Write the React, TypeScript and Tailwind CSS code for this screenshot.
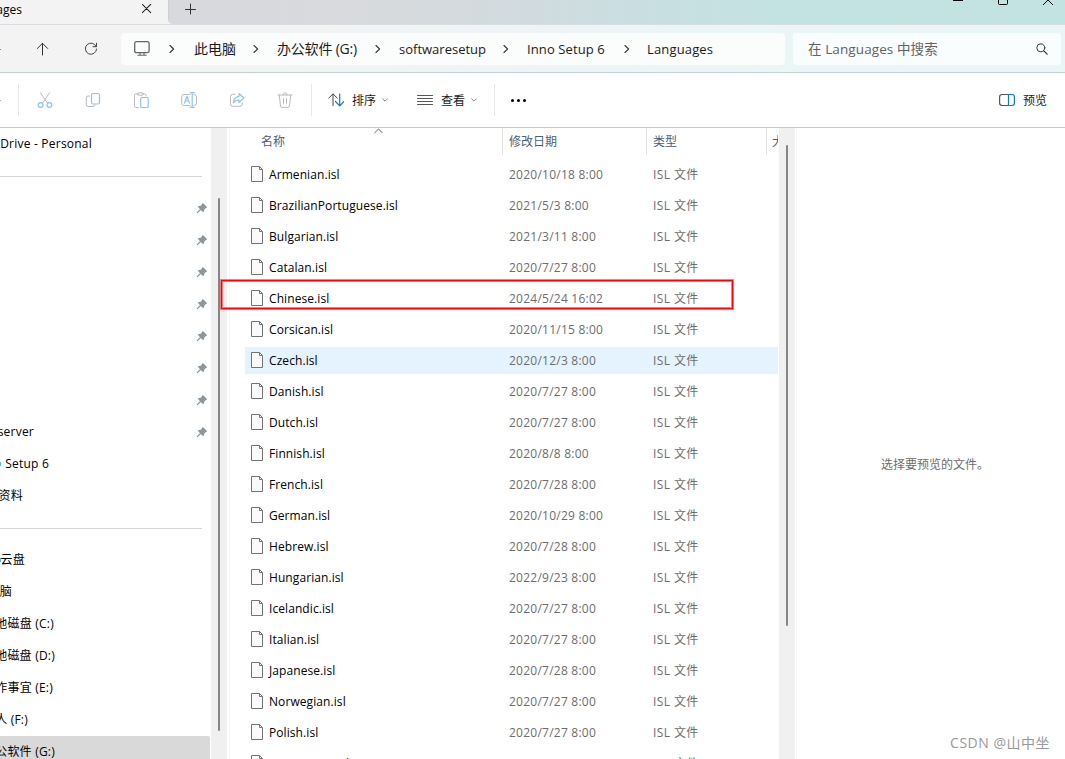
import type { ReactNode } from "react";
import clsx from "clsx";

type FileRow = {
  name: string;
  modified: string;
};

type SideItem =
  | { kind: "divider" }
  | {
      kind: "item";
      label?: string;
      width?: string;
      pinned?: boolean;
      active?: boolean;
      dot?: boolean;
    };

const files: FileRow[] = [
  { name: "Armenian.isl", modified: "2020/10/18 8:00" },
  { name: "BrazilianPortuguese.isl", modified: "2021/5/3 8:00" },
  { name: "Bulgarian.isl", modified: "2021/3/11 8:00" },
  { name: "Catalan.isl", modified: "2020/7/27 8:00" },
  { name: "Chinese.isl", modified: "2024/5/24 16:02" },
  { name: "Corsican.isl", modified: "2020/11/15 8:00" },
  { name: "Czech.isl", modified: "2020/12/3 8:00" },
  { name: "Danish.isl", modified: "2020/7/27 8:00" },
  { name: "Dutch.isl", modified: "2020/7/27 8:00" },
  { name: "Finnish.isl", modified: "2020/8/8 8:00" },
  { name: "French.isl", modified: "2020/7/28 8:00" },
  { name: "German.isl", modified: "2020/10/29 8:00" },
  { name: "Hebrew.isl", modified: "2020/7/28 8:00" },
  { name: "Hungarian.isl", modified: "2022/9/23 8:00" },
  { name: "Icelandic.isl", modified: "2020/7/27 8:00" },
  { name: "Italian.isl", modified: "2020/7/27 8:00" },
  { name: "Japanese.isl", modified: "2020/7/28 8:00" },
  { name: "Norwegian.isl", modified: "2020/7/27 8:00" },
  { name: "Polish.isl", modified: "2020/7/27 8:00" },
  { name: "Portuguese.isl", modified: "2020/7/27 8:00" },
];

const hovered = "Czech.isl";

const sideItems: SideItem[] = [
  { kind: "item", label: "Drive - Personal", width: "w-[92px]" },
  { kind: "divider" },
  { kind: "item", pinned: true },
  { kind: "item", pinned: true },
  { kind: "item", pinned: true },
  { kind: "item", pinned: true },
  { kind: "item", pinned: true },
  { kind: "item", pinned: true },
  { kind: "item", pinned: true },
  { kind: "item", label: "server", width: "w-[34px]", pinned: true },
  { kind: "item", label: "Setup 6", width: "w-[49px]", dot: true },
  { kind: "item", label: "资料", width: "w-[23px]" },
  { kind: "divider" },
  { kind: "item", label: "云盘", width: "w-[25px]", dot: true },
  { kind: "item", label: "电脑", width: "w-[12px]" },
  { kind: "item", label: "地磁盘 (C:)", width: "w-[54px]" },
  { kind: "item", label: "地磁盘 (D:)", width: "w-[55px]" },
  { kind: "item", label: "作事宜 (E:)", width: "w-[53px]" },
  { kind: "item", label: "人 (F:)", width: "w-[28px]" },
  { kind: "item", label: "公软件 (G:)", width: "w-[55px]", active: true },
];

function Icon({
  children,
  className,
  size = 16,
}: {
  children: ReactNode;
  className?: string;
  size?: number;
}) {
  return (
    <svg
      width={size}
      height={size}
      viewBox={`0 0 ${size} ${size}`}
      fill="none"
      stroke="currentColor"
      strokeLinecap="round"
      strokeLinejoin="round"
      className={clsx("shrink-0", className)}
    >
      {children}
    </svg>
  );
}

function Chevron() {
  return (
    <Icon size={8} className="text-[#333]">
      <path d="M2 0.5 5.6 4 2 7.5" strokeWidth="1.1" />
    </Icon>
  );
}

function DownChevron() {
  return (
    <Icon size={6} className="text-[#8a8a8a]">
      <path d="M0.6 1.8 3 4.2 5.4 1.8" />
    </Icon>
  );
}

function Pin() {
  return (
    <svg width="12" height="12" viewBox="0 0 12 12" className="shrink-0">
      <path
        d="M6.6 0.8 11.2 5.3 9.9 6 8.4 7.2 8 9.6 7 10 4.9 8 1.4 11.2 0.7 10.6 4 7.1 1.9 5 2.4 4 4.9 3.8 6 2.2Z"
        fill="#8b969f"
      />
    </svg>
  );
}

function FileIcon() {
  return (
    <svg width="12" height="16" viewBox="0 0 12 16" className="mb-[2px] shrink-0">
      <path
        d="M0.5 0.5H8.5L11.5 3.5V15.5H0.5Z"
        fill="#fafafa"
        stroke="#737373"
      />
      <path d="M8.5 0.5V3.5H11.5" fill="none" stroke="#737373" />
    </svg>
  );
}

function TabStrip() {
  return (
    <div className="flex h-6 bg-[#f3f3f3]">
      <div className="flex w-[168px] shrink-0 items-start">
        <div className="flex w-[22px] justify-end overflow-hidden pt-[2px] text-[12px] leading-4 text-black">
          <span>Languages</span>
        </div>
        <Icon size={10} className="mt-1 ml-[120px] text-[#1f1f1f]">
          <path d="M0.3 0.4 8.7 8.6M8.7 0.4 0.3 8.6" strokeWidth="1.05" />
        </Icon>
      </div>
      <div className="flex flex-1 items-start rounded-bl-[5px] border-l border-[#cfd0d3] bg-[linear-gradient(90deg,#d8d9dd_0px,#d8dadd_190px,#d2dbdf_350px,#c9dfe2_480px,#c3e3e2_620px)]">
        <Icon size={12} className="mt-[3px] ml-4 text-[#333]">
          <path d="M5.5 1V11M0.5 6.5H10.5" />
        </Icon>
        <div className="ml-auto flex gap-[35px] pr-[12px] text-black">
          <Icon size={10}>
            <path d="M0 0.3H10" strokeWidth="1.2" />
          </Icon>
          <Icon size={10}>
            <path d="M0.5 -2V3.5Q0.5 4.5 1.5 4.5H8.5Q9.5 4.5 9.5 3.5V-2" />
          </Icon>
          <Icon size={10}>
            <path d="M0.3 4.7 5 0 9.7 4.7" />
          </Icon>
        </div>
      </div>
    </div>
  );
}

function AddressBar() {
  return (
    <div className="flex h-[49px] items-center border-y border-t-[#d8dddf] border-b-[#c4d3d3] bg-[linear-gradient(90deg,#f3f3f3_250px,#eef4f6_560px,#eaf6f6_800px)] pt-px text-[13px] text-[#1b1b1b]">
      <div className="h-px w-px bg-[#888]" />
      <Icon size={14} className="ml-[35px] text-[#333]">
        <path d="M6.5 13V1.5M1.3 6.5 6.5 1.3 11.7 6.5" />
      </Icon>
      <Icon size={14} className="ml-[34px] text-[#444]">
        <path d="M12.2 4.6A5.6 5.6 0 1 0 12.6 7M12.5 1.2V4.7H9" />
      </Icon>
      <div className="ml-[23px] flex h-8 w-[664px] shrink-0 items-center rounded-[4px] bg-[#fbfcfc]">
        <Icon size={16} className="ml-[13px] text-[#666]">
          <rect x="0.7" y="0.7" width="14.4" height="11" rx="1.8" strokeWidth="1.3" />
          <path d="M6 12V14M10 12V14M3.8 14.3H12.2" strokeWidth="1.1" />
        </Icon>
        <div className="ml-[18px] flex w-2">
          <Chevron />
        </div>
        <span className="mb-[2px] ml-[18px] w-[43px] whitespace-nowrap text-[14px]">
          此电脑
        </span>
        <div className="ml-[15px] flex">
          <Chevron />
        </div>
        <span className="mb-[2px] ml-[17px] w-[82px] whitespace-nowrap text-[14px] tracking-[-0.2px]">
          办公软件 (G:)
        </span>
        <div className="ml-[15px] flex">
          <Chevron />
        </div>
        <span className="ml-[17px] w-[87px] pt-[2px] whitespace-nowrap">
          softwaresetup
        </span>
        <div className="ml-[16px] flex">
          <Chevron />
        </div>
        <span className="ml-[17px] w-[79px] pt-[2px] whitespace-nowrap tracking-[0.1px]">
          Inno Setup 6
        </span>
        <div className="ml-[17px] flex">
          <Chevron />
        </div>
        <span className="ml-[16px] pt-[2px] whitespace-nowrap tracking-[0.15px]">
          Languages
        </span>
      </div>
      <div className="ml-2 flex h-8 w-[268px] shrink-0 items-center rounded-[4px] bg-[#fafdfd] text-[#606363]">
        <span className="ml-[15px] whitespace-nowrap text-[13.5px] tracking-[0.1px]">
          在 Languages 中搜索
        </span>
        <Icon size={12} className="mr-[13px] ml-auto text-[#333]">
          <circle cx="4.8" cy="4.8" r="4" />
          <path d="M7.8 7.8 11.2 11.2" strokeWidth="1.2" />
        </Icon>
      </div>
    </div>
  );
}

function Toolbar() {
  return (
    <div className="flex h-[55px] items-center border-b border-[#bfcdcd] bg-white text-[12px] text-[#1b1b1b]">
      <div className="h-px w-px bg-[#aaa]" />
      <div className="ml-[17px] h-8 w-px bg-[#e8e8e8]" />
      <div className="ml-[18px] flex gap-8 text-[#bababa]">
        <Icon>
          <path d="M3.5 0.8 10.3 11M12.5 0.8 5.7 11" />
          <g stroke="#8fc4ee" strokeWidth="1.2">
            <circle cx="3.6" cy="13" r="2.4" />
            <circle cx="12.4" cy="13" r="2.4" />
          </g>
        </Icon>
        <Icon>
          <path d="M4.5 4H3Q1.3 4 1.3 5.7V12.7Q1.3 14.5 3.1 14.5H8Q9.6 14.5 9.8 13" />
          <rect x="6.5" y="1.5" width="8" height="10.5" rx="1.5" stroke="#8fc4ee" strokeWidth="1.2" />
        </Icon>
        <Icon>
          <path d="M4.5 2H2.7Q1.5 2 1.5 3.2V14.3Q1.5 15.5 2.7 15.5H5.5M10 2H11.8Q13 2 13 3.2V4M4.7 2.2Q4.7 0.8 6 0.8H9Q10.2 0.8 10.2 2T9 3.2H6Q4.7 3.2 4.7 2.2Z" />
          <rect x="7.7" y="5.5" width="7.5" height="10" rx="1" stroke="#8fc4ee" strokeWidth="1.2" />
        </Icon>
        <Icon>
          <path d="M9 2.5H3Q0.7 2.5 0.7 4.8V11.2Q0.7 13.5 3 13.5H9M13 2.5Q15.5 2.5 15.5 5V11Q15.5 13.5 13 13.5" />
          <path d="M11.2 1V15M9.2 0.7H13.2M9.2 15.4H13.2M3.4 11.2 6 4.4 8.6 11.2M4.3 9H7.7" stroke="#8fc4ee" strokeWidth="1.2" />
        </Icon>
        <Icon>
          <path d="M6 2.3H3.8Q1.5 2.3 1.5 4.6V12Q1.5 14.3 3.8 14.3H11Q13.3 14.3 13.3 12V11" />
          <path d="M10 1.5 15 6 10 10.5V8Q6.5 7.8 4.5 10.8 5 4.8 10 4.3Z" stroke="#8fc4ee" strokeWidth="1.2" />
        </Icon>
        <Icon>
          <path d="M1 3H15M2.3 3 3.5 14Q3.7 15.4 5 15.4H11Q12.3 15.4 12.5 14L13.7 3M6 3Q6 0.8 8 0.8T10 3M6.5 6.5V11.5M9.5 6.5V11.5" />
        </Icon>
      </div>
      <div className="ml-[18px] h-8 w-px bg-[#e8e8e8]" />
      <Icon className="ml-4 text-[#444]">
        <path d="M5 13.5V2.2M0.7 6.2 5 1.8 9.3 6.2" />
        <path d="M11.7 2V13.5M7.5 9.5 11.7 13.8 15.9 9.5" stroke="#0f78d4" strokeWidth="1.2" />
      </Icon>
      <span className="ml-2 w-[25px] pt-[2px] whitespace-nowrap">排序</span>
      <div className="ml-[5px] flex">
        <DownChevron />
      </div>
      <Icon className="ml-[29px] text-[#555]">
        <path d="M0.5 3.5H15.5M0.5 6.5H15.5M0.5 9.5H15.5M0.5 12.5H15.5" />
      </Icon>
      <span className="ml-2 w-[25px] pt-[2px] whitespace-nowrap">查看</span>
      <div className="ml-[5px] flex">
        <DownChevron />
      </div>
      <div className="ml-[17px] h-8 w-px bg-[#e8e8e8]" />
      <div className="ml-4 flex gap-[3px] pt-px">
        <div className="size-[3px] rounded-full bg-black" />
        <div className="size-[3px] rounded-full bg-black" />
        <div className="size-[3px] rounded-full bg-black" />
      </div>
      <Icon className="mr-2 ml-auto text-[#555]">
        <path d="M9.5 2.5H3Q0.6 2.5 0.6 4.9V11.1Q0.6 13.5 3 13.5H9.5" strokeWidth="1.2" />
        <path d="M9.5 2.5H13Q15.4 2.5 15.4 4.9V11.1Q15.4 13.5 13 13.5H9.5Z" stroke="#0f78d4" strokeWidth="1.2" />
      </Icon>
      <span className="mr-[17px] w-[25px] pt-[2px] whitespace-nowrap">预览</span>
    </div>
  );
}

function Sidebar() {
  return (
    <div className="w-[211px] shrink-0 overflow-hidden text-[12px] text-black">
      {sideItems.map((item, i) =>
        item.kind === "divider" ? (
          <div key={i} className="flex h-8 items-center">
            <div className="h-px w-[202px] bg-[#d6d6d6]" />
          </div>
        ) : (
          <div
            key={i}
            className={clsx(
              "flex h-8 w-[210px] items-center",
              item.active && "rounded-r-[2px] bg-[#d9d9d9]",
            )}
          >
            {item.dot && <div className="-mr-px h-1 w-px bg-[#58b9ec]" />}
            {item.label && (
              <div className={clsx("flex justify-end overflow-hidden", item.width)}>
                <span className="tracking-[0.22px] whitespace-nowrap">
                  {item.label}
                </span>
              </div>
            )}
            {item.pinned && (
              <div className="mr-[2px] ml-auto flex">
                <Pin />
              </div>
            )}
          </div>
        ),
      )}
    </div>
  );
}

function FileList() {
  return (
    <div className="w-[549px] shrink-0 overflow-hidden text-[12px]">
      <div className="flex h-[27px] text-[#4a5f7a]">
        <div className="flex w-[272px] shrink-0 pl-[31px]">
          <span className="w-[113px] shrink-0 pt-1 leading-[19px]">名称</span>
          <Icon size={9} className="-mt-px text-[#666]">
            <path d="M0.7 5.8 4.5 2 8.3 5.8" />
          </Icon>
        </div>
        <div className="w-36 shrink-0 border-l border-[#e3e3e3] pt-1 pl-[6px] leading-[19px]">
          修改日期
        </div>
        <div className="w-[120px] shrink-0 border-l border-[#e3e3e3] pt-1 pl-[6px] leading-[19px]">
          类型
        </div>
        <div className="w-3 shrink-0 overflow-hidden border-l border-[#e3e3e3] pt-1 pl-[5px] leading-[19px] whitespace-nowrap">
          大小
        </div>
      </div>
      <div className="mt-[6px] ml-[15px] flex flex-col gap-1">
        {files.map((file) => (
          <div
            key={file.name}
            className={clsx(
              "flex h-[27px] w-[533px] items-center pl-[6px] text-[#6d6d6d]",
              file.name === hovered && "bg-[#e5f3ff]",
            )}
          >
            <FileIcon />
            <span className="ml-[6px] w-60 tracking-[0.08px] text-black">
              {file.name}
            </span>
            <span className="w-36 tracking-[0.24px]">{file.modified}</span>
            <span className="tracking-[0.4px]">ISL 文件</span>
          </div>
        ))}
      </div>
    </div>
  );
}

export default function App() {
  return (
    <div className="relative flex h-[759px] w-[1065px] flex-col overflow-hidden bg-white font-['Open_Sans','Noto_Sans_CJK_SC',sans-serif]">
      <TabStrip />
      <AddressBar />
      <Toolbar />
      <div className="flex min-h-0 flex-1">
        <Sidebar />
        <div className="w-4 shrink-0 bg-[#f0f0f0] pt-[70px] pl-[7px]">
          <div className="h-[533px] w-[2px] rounded-full bg-[#858585]" />
        </div>
        <div className="mr-px ml-[2px] w-px shrink-0 bg-[#f5f5f5]" />
        <div className="-ml-px flex">
          <FileList />
        </div>
        <div className="w-4 shrink-0 bg-[#f0f0f0] pt-[17px] pl-[7px]">
          <div className="h-[481px] w-[2px] rounded-full bg-[#858585]" />
        </div>
        <div className="ml-px w-px shrink-0 bg-[#f5f5f5]" />
        <div className="flex flex-1 flex-col">
          <div className="mt-[328px] ml-[84px] text-[12px] leading-[18px] whitespace-nowrap text-[#6d6d6d]">
            选择要预览的文件。
          </div>
        </div>
      </div>

      {/* highlight around Chinese.isl */}
      <div className="absolute top-[279px] left-[220px] h-[31px] w-[514px] border border-[#ff000080]">
        <div className="h-full border border-[#ff0000] shadow-[inset_0_0_0_1px_#ff000080]" />
      </div>
      <div className="absolute right-[15px] bottom-[6px] text-[14px] leading-5 tracking-[0.5px] whitespace-nowrap text-[#999]">
        CSDN @山中坐
      </div>
    </div>
  );
}
